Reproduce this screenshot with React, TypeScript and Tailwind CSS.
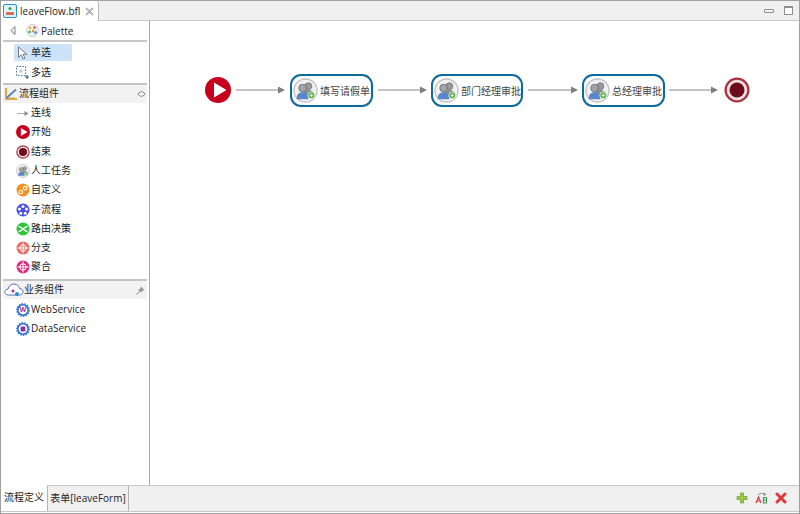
import type { ReactNode } from 'react';

const uiFont = "font-['Open_Sans','Noto_Sans_CJK_SC',sans-serif]";

const StartIcon = ({ size = 14 }: { size?: number }) => (
  <svg width={size} height={size} viewBox="0 0 26 26">
    <circle cx="13" cy="13" r="13" fill="#c8001e" />
    <path d="M9 5.5 L21.5 13 L9 20.5 Z" fill="#fff" />
  </svg>
);

const EndIcon = ({ size = 14 }: { size?: number }) => (
  <svg width={size} height={size} viewBox="0 0 26 26">
    <circle cx="13" cy="13" r="12.5" fill="#a8303f" />
    <circle cx="13" cy="13" r="10.3" fill="#f3dfe0" />
    <circle cx="13" cy="13" r="7.5" fill="#6d0c1c" />
  </svg>
);

const UserIcon = ({ size = 14 }: { size?: number }) => (
  <svg className="shrink-0" width={size} height={size} viewBox="0 0 26 26">
    <circle cx="13" cy="13" r="12" fill="#f1f1f1" stroke="#c4c4c4" strokeWidth="1.5" />
    <circle cx="16" cy="8.5" r="3.6" fill="#9a9a9a" stroke="#666" strokeWidth="0.7" />
    <path d="M10.5 19 C10.5 14 12.5 12.5 16 12.5 C19.5 12.5 21.5 14 21.5 19 Z" fill="#8c8c8c" />
    <circle cx="10" cy="10.5" r="4" fill="#a4a4a4" stroke="#5c6470" strokeWidth="0.8" />
    <path d="M3.8 22 C3.8 17 6 14.8 10 14.8 C14 14.8 16 17 16 22 Z" fill="#5a86cc" />
    <circle cx="19" cy="18" r="3.6" fill="#56b040" stroke="#fff" strokeWidth="0.7" />
    <path d="M17.2 18 H20.8 M19 16.2 V19.8" stroke="#fff" strokeWidth="0.9" />
  </svg>
);

const CustomIcon = () => (
  <svg width="14" height="14" viewBox="0 0 14 14">
    <circle cx="7" cy="7" r="6.5" fill="#f3931f" />
    <circle cx="4.8" cy="9" r="1.8" fill="none" stroke="#fff" strokeWidth="1.1" />
    <circle cx="9.2" cy="5.2" r="1.8" fill="none" stroke="#fff" strokeWidth="1.1" />
  </svg>
);

const SubflowIcon = () => (
  <svg width="14" height="14" viewBox="0 0 14 14">
    <circle cx="7" cy="7" r="6.5" fill="#4a4ee8" />
    <circle cx="7" cy="3.4" r="1.5" fill="#fff" />
    <circle cx="10.5" cy="6" r="1.5" fill="#fff" />
    <circle cx="9.2" cy="10.2" r="1.5" fill="#fff" />
    <circle cx="4.8" cy="10.2" r="1.5" fill="#fff" />
    <circle cx="3.5" cy="6" r="1.5" fill="#fff" />
  </svg>
);

const RouterIcon = () => (
  <svg width="14" height="14" viewBox="0 0 14 14">
    <circle cx="7" cy="7" r="6.5" fill="#2fc43a" />
    <path d="M2.5 4.5 C6 4.5 8 9.5 11.5 9.5 M2.5 9.5 C6 9.5 8 4.5 11.5 4.5" fill="none" stroke="#fff" strokeWidth="1.3" />
  </svg>
);

const CrossIcon = ({ color }: { color: string }) => (
  <svg width="14" height="14" viewBox="0 0 14 14">
    <circle cx="7" cy="7" r="6.5" fill={color} />
    <path d="M7 1.5 V12.5 M1.5 7 H12.5" stroke="#fff" strokeWidth="1" />
    <circle cx="7" cy="7" r="3.2" fill="none" stroke="#fff" strokeWidth="1" />
  </svg>
);

const GearIcon = ({ inner }: { inner: ReactNode }) => (
  <svg width="14" height="14" viewBox="0 0 14 14">
    <circle cx="7" cy="7" r="5.2" fill="#fff" stroke="#2f6fd6" strokeWidth="1.6" />
    <circle cx="7" cy="7" r="6.2" fill="none" stroke="#2f6fd6" strokeWidth="1.4" strokeDasharray="1.5 1.2" />
    {inner}
  </svg>
);

const Row = ({ icon, label }: { icon: ReactNode; label: string }) => (
  <div className="flex h-[19.3px] items-center pl-[14px]">
    <span className="flex w-[16px] shrink-0 items-center justify-center">{icon}</span>
    <span className="pb-[2px] text-[10px] leading-none text-[#222]">{label}</span>
  </div>
);

const DrawerHeader = ({ icon, label, right, iconWidth }: { icon: ReactNode; label: string; right: ReactNode; iconWidth: string }) => (
  <div className="mr-[2px] ml-[2px] flex h-[20px] items-center justify-between border-t-2 border-[#c4c4c4] bg-[#f2f2f2] pr-[1px]">
    <div className="flex items-center">
      <span className={`flex justify-center ${iconWidth}`}>{icon}</span>
      <span className="pb-[2px] text-[10px] leading-none text-[#222]">{label}</span>
    </div>
    {right}
  </div>
);

const FlowNode = ({ label, left, width }: { label: string; left: number; width: string }) => (
  <div
    className={`absolute top-[53px] flex h-[33px] items-center rounded-[11px] border-2 border-[#0f6a9c] bg-white pl-[1px] ${width}`}
    style={{ left }}
  >
    <UserIcon size={25} />
    <span className="ml-[2px] text-[10px] leading-none whitespace-nowrap text-[#444]">{label}</span>
  </div>
);

const Arrow = ({ left, width }: { left: number; width: number }) => (
  <svg className="absolute top-[63px]" style={{ left }} width={width} height="12" viewBox={`0 0 ${width} 12`}>
    <path d={`M0 6 H${width - 6}`} stroke="#8a8a8a" strokeWidth="1" />
    <path d={`M${width - 7} 2.5 L${width} 6 L${width - 7} 9.5 Z`} fill="#7f7f7f" />
  </svg>
);

export default function App() {
  return (
    <div className={`flex h-[514px] w-[800px] flex-col overflow-hidden border border-[#a0a0a0] bg-white ${uiFont}`}>
      {/* editor tab bar */}
      <div className="flex h-[20px] shrink-0 items-stretch bg-[#f0f0f0]">
        <div className="flex w-[98px] items-center rounded-t-[3px] border-r border-[#b5b5b5] bg-white pl-[2px]">
          <svg width="14" height="14" viewBox="0 0 14 14">
            <rect x="0.5" y="0.5" width="13" height="13" rx="1.5" fill="#e2f2fb" stroke="#2c8fd0" />
            <circle cx="7" cy="4.5" r="1.6" fill="#3aa35a" />
            <rect x="3" y="8" width="8" height="3" fill="#d9705a" />
          </svg>
          <span className="ml-[3px] pb-[1px] text-[10px] leading-none text-[#222]">leaveFlow.bfl</span>
          <svg className="ml-[5px]" width="9" height="9" viewBox="0 0 9 9">
            <path d="M1 1 L8 8 M8 1 L1 8" stroke="#8a8a8a" strokeWidth="1.6" fill="none" />
            <path d="M1 1 L8 8 M8 1 L1 8" stroke="#eee" strokeWidth="0.5" fill="none" />
          </svg>
        </div>
        <div className="flex flex-1 items-center justify-end gap-[10px] border-b border-[#c8c8c8] pr-[6px]">
          <span className="h-[4px] w-[10px] rounded-[1px] border border-[#8f8f8f] bg-[#f4f4f4]" />
          <span className="h-[9px] w-[9px] border border-t-2 border-[#8f8f8f] bg-white" />
        </div>
      </div>

      <div className="flex min-h-0 flex-1">
        {/* palette */}
        <div className="w-[149px] shrink-0 border-r border-[#a8a8a8] bg-white">
          <div className="mr-[2px] ml-[2px] flex h-[21px] items-center border-b-2 border-[#c8c8c8]">
            <svg className="ml-[7px]" width="6" height="9" viewBox="0 0 6 9">
              <path d="M5 0.5 L0.8 4.5 L5 8.5 Z" fill="#f4f4f4" stroke="#808080" />
            </svg>
            <svg className="ml-[10px]" width="13" height="13" viewBox="0 0 13 13">
              <circle cx="6.5" cy="6.5" r="6" fill="#eee" stroke="#bbb" strokeWidth="0.7" />
              <circle cx="4" cy="4" r="1.3" fill="#e8b82a" />
              <circle cx="8.5" cy="3.6" r="1.3" fill="#e25a4a" />
              <circle cx="3.5" cy="8" r="1.3" fill="#3fae49" />
              <circle cx="7" cy="7" r="1.2" fill="#e88a2a" />
              <circle cx="9.5" cy="8.5" r="1.3" fill="#3b7ad9" />
            </svg>
            <span className="ml-[2px] text-[10px] leading-none text-[#222]">Palette</span>
          </div>
          <div className="flex h-[20px] items-center pt-px">
            <div className="ml-[13px] flex h-[17px] w-[58px] items-center rounded-[2px] bg-[#cde3fa] pl-[3px]">
              <svg width="12" height="14" viewBox="0 0 12 14">
                <path d="M1.5 1 L1.5 11.5 L4.2 9 L6.2 13 L8 12.2 L6 8.3 L9.8 8.3 Z" fill="#fff" stroke="#6b6b6b" strokeWidth="0.9" />
              </svg>
              <span className="ml-[2px] pb-[2px] text-[10px] leading-none text-[#222]">单选</span>
            </div>
          </div>
          <div className="flex h-[21px] items-center pl-[15px]">
            <svg width="13" height="13" viewBox="0 0 13 13">
              <rect x="0.5" y="0.5" width="9" height="9" fill="none" stroke="#4a6e9e" strokeDasharray="1.5 1.5" />
              <rect x="3.5" y="3.5" width="3" height="3" fill="#b9c9de" />
              <path d="M11 9 V13 M9 11 H13" stroke="#33527e" strokeWidth="1" />
            </svg>
            <span className="ml-[2px] pb-[2px] text-[10px] leading-none text-[#222]">多选</span>
          </div>
          <DrawerHeader
            iconWidth="w-[16px]"
            icon={
              <svg width="14" height="14" viewBox="0 0 14 14">
                <path d="M2 1 V12 H13" fill="none" stroke="#d8a84a" strokeWidth="2" />
                <path d="M2.5 11 L12 2.5" stroke="#5b86c0" strokeWidth="2" />
                <path d="M5 10.5 H11" stroke="#e9c985" strokeWidth="1" />
              </svg>
            }
            label="流程组件"
            right={
              <svg width="9" height="6" viewBox="0 0 9 6">
                <path d="M3.2 0.8 L0.8 3 L3.2 5.2 M5.8 0.8 L8.2 3 L5.8 5.2 M3.2 0.8 H5.8 M3.2 5.2 H5.8" fill="none" stroke="#8a8a8a" />
              </svg>
            }
          />
          <div className="pt-[0.4px] pb-[2px]">
            <Row
              label="连线"
              icon={
                <svg width="12" height="7" viewBox="0 0 12 7">
                  <path d="M0 3.5 H8" stroke="#b0b0b0" />
                  <path d="M7.5 1 L11.5 3.5 L7.5 6 Z" fill="#8a8a8a" />
                </svg>
              }
            />
            <Row label="开始" icon={<StartIcon />} />
            <Row label="结束" icon={<EndIcon />} />
            <Row label="人工任务" icon={<UserIcon />} />
            <Row label="自定义" icon={<CustomIcon />} />
            <Row label="子流程" icon={<SubflowIcon />} />
            <Row label="路由决策" icon={<RouterIcon />} />
            <Row label="分支" icon={<CrossIcon color="#f0685c" />} />
            <Row label="聚合" icon={<CrossIcon color="#dd2c80" />} />
          </div>
          <DrawerHeader
            iconWidth="w-[21px]"
            icon={
              <svg width="20" height="14" viewBox="0 0 20 14">
                <path d="M4.5 12 C1.5 12 0.7 9.8 1 8.5 C1.3 6.8 2.8 6 4 6.2 C4.5 3 7 1 10 1 C13 1 15 3 15.5 5.5 C17.8 5.6 19.3 7.2 19 9.2 C18.7 11 17.3 12 15.5 12 Z" fill="#fff" stroke="#5b6fb0" strokeWidth="1" />
                <circle cx="9" cy="8" r="1.5" fill="#a0309a" />
                <circle cx="13" cy="11" r="2" fill="#2a8fd8" />
              </svg>
            }
            label="业务组件"
            right={
              <svg className="mr-[1px]" width="9" height="9" viewBox="0 0 9 9">
                <path d="M5 0.5 L8.5 4 L7 4.5 L4.8 6.8 L2.2 4.2 L4.5 2 Z" fill="#9a9a9a" />
                <path d="M3 6 L0.5 8.5" stroke="#777" />
              </svg>
            }
          />
          <div className="pt-px">
            <Row
              label="WebService"
              icon={
                <GearIcon
                  inner={
                    <text x="7" y="9.4" textAnchor="middle" fontSize="7" fontWeight="700" fill="#a8329a">
                      W
                    </text>
                  }
                />
              }
            />
            <Row label="DataService" icon={<GearIcon inner={<rect x="4.6" y="4.4" width="4.8" height="5.2" rx="1.4" fill="#8a2f9c" />} />} />
          </div>
        </div>

        {/* diagram canvas */}
        <div className="relative flex-1 bg-white">
          <div className="absolute top-[56px] left-[55px]">
            <StartIcon size={26} />
          </div>
          <Arrow left={86} width={49} />
          <FlowNode label="填写请假单" left={140} width="w-[83px]" />
          <Arrow left={228} width={49} />
          <FlowNode label="部门经理审批" left={281} width="w-[92px]" />
          <Arrow left={378} width={50} />
          <FlowNode label="总经理审批" left={432} width="w-[83px]" />
          <Arrow left={519} width={49} />
          <div className="absolute top-[56px] left-[574px]">
            <EndIcon size={26} />
          </div>
        </div>
      </div>

      {/* bottom page tabs */}
      <div className="mb-[1px] flex h-[27px] shrink-0 items-stretch border-t border-b border-[#c8c8c8] bg-[#f0f0f0]">
        <div className="-mt-px flex w-[46px] items-center justify-center bg-white pb-[2px]">
          <span className="text-[10px] leading-none text-[#222]">流程定义</span>
        </div>
        <div className="flex w-[82px] items-center justify-center border-r border-l border-[#b5b5b5] bg-[#f0f0f0] pb-[1px]">
          <span className="text-[10px] leading-none whitespace-nowrap text-[#222]">表单[leaveForm]</span>
        </div>
        <div className="flex flex-1 items-center justify-end gap-[7px] pr-[12px] pb-[1px]">
          <svg width="12" height="12" viewBox="0 0 12 12">
            <path d="M4.5 1 H7.5 V4.5 H11 V7.5 H7.5 V11 H4.5 V7.5 H1 V4.5 H4.5 Z" fill="#9cc84a" stroke="#6c9a2c" strokeWidth="0.7" />
          </svg>
          <svg width="13" height="12" viewBox="0 0 13 12">
            <path d="M3 3 C5 1 8 1 10 2.5" fill="none" stroke="#8a8a8a" />
            <path d="M9 0.5 L11.5 2.8 L8.5 3.8 Z" fill="#8a8a8a" />
            <path d="M1 11 L3.5 5 L6 11 M2 9 H5" fill="none" stroke="#d43a3a" strokeWidth="1.2" />
            <path d="M8.5 5.5 H11.5 V11 H8.5 Z M8.5 8 H11.5" fill="none" stroke="#3fa05a" strokeWidth="1.2" />
          </svg>
          <svg width="12" height="12" viewBox="0 0 12 12">
            <path d="M2 2 L10 10 M10 2 L2 10" stroke="#e0383c" strokeWidth="3" strokeLinecap="round" />
          </svg>
        </div>
      </div>
    </div>
  );
}
